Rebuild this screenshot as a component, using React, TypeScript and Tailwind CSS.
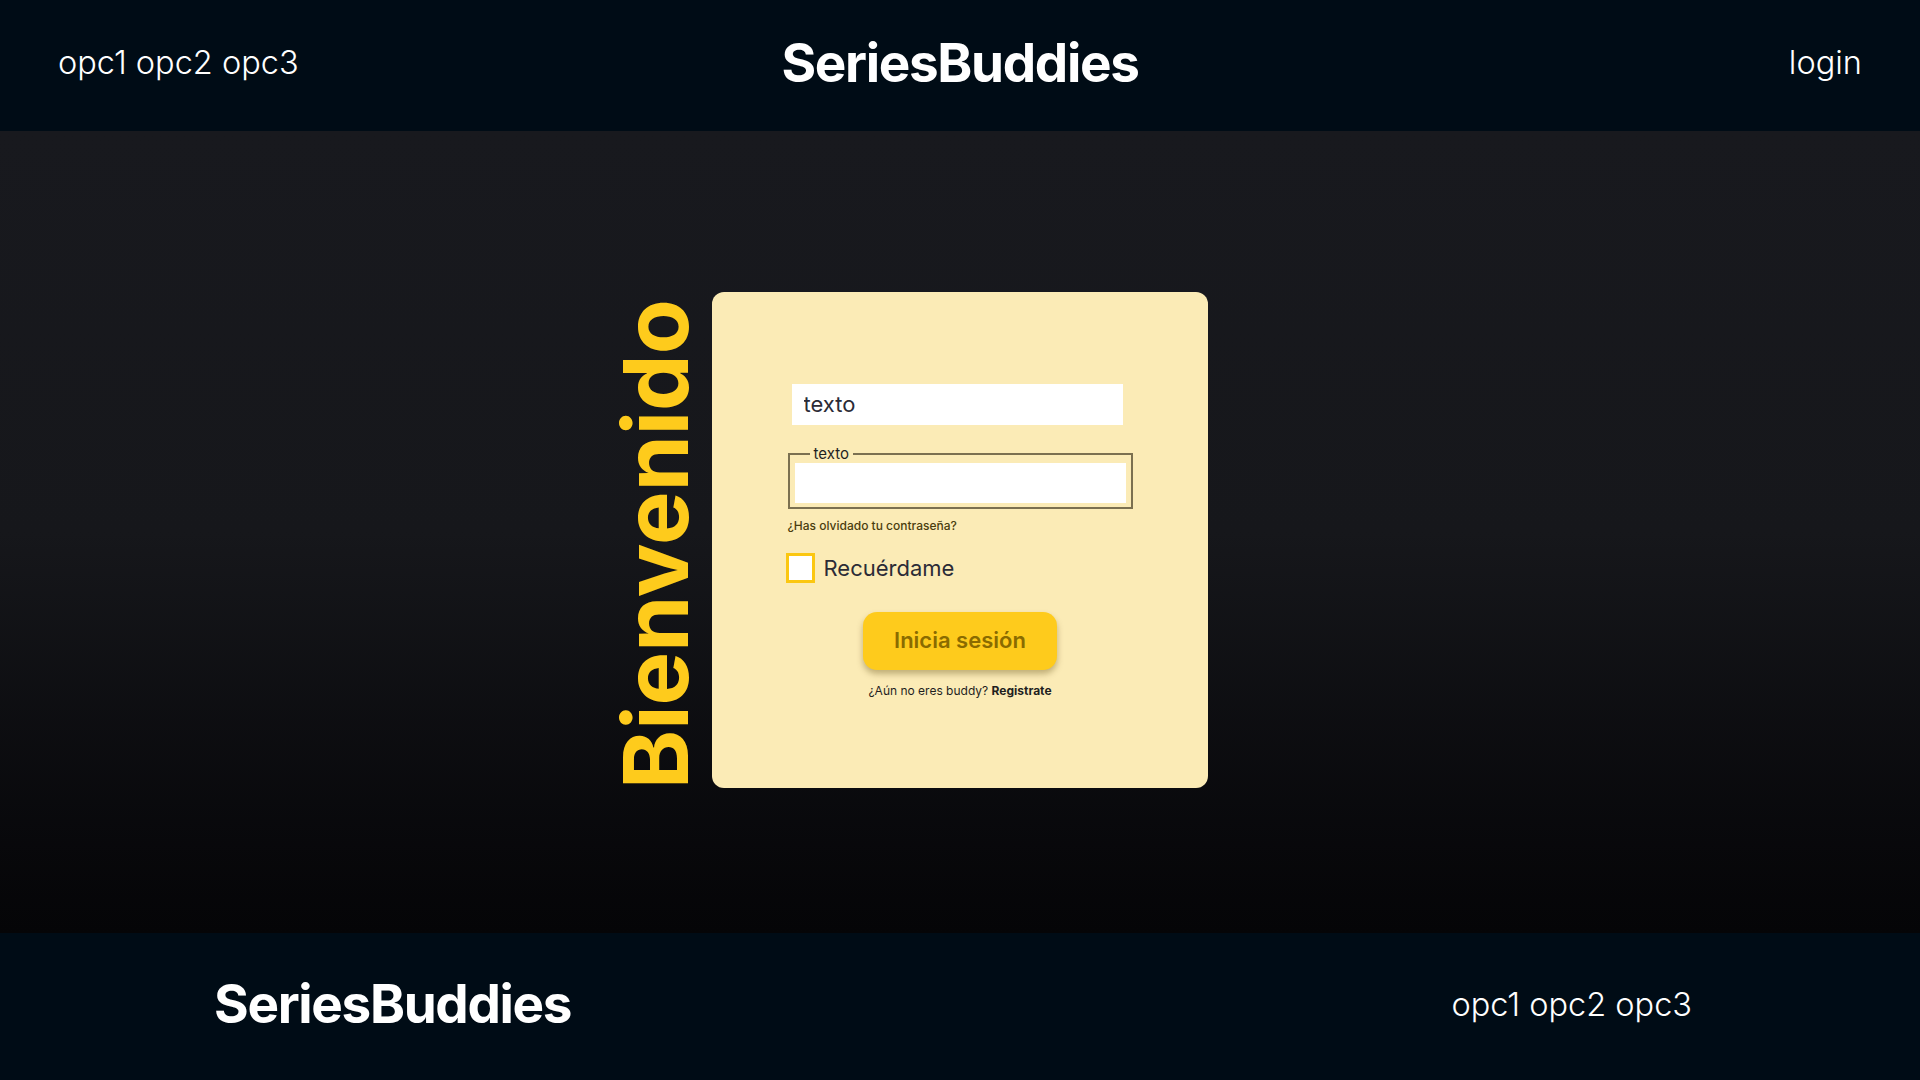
export default function App() {
  return (
    <div className="w-full min-h-screen flex flex-col bg-[#050507] font-['Inter',sans-serif]">
      {/* Header */}
      <header className="h-[131px] bg-[#000c16] grid grid-cols-3 items-center px-[58px] pb-[4px]">
        <nav className="text-white text-[32.5px] font-light">opc1 opc2 opc3</nav>
        <h1 className="text-white text-[53px] font-bold text-center tracking-tight">SeriesBuddies</h1>
        <div className="text-white text-[32.5px] font-light text-right">login</div>
      </header>

      {/* Main */}
      <main className="h-[802px] bg-gradient-to-b from-[#18191e] via-[#16171b] to-[#050507] grid grid-cols-[1fr_auto_1fr] items-center pt-[15px]">
        <div className="flex justify-end pr-[17px] pt-[10px]">
          <span className="[writing-mode:vertical-rl] rotate-180 text-[#fecb1c] text-[90px] font-bold leading-[78px]">
            Bienvenido
          </span>
        </div>

        <div className="w-[496px] h-[496px] rounded-xl bg-[#fbebb6] flex flex-col items-center pt-[92px]">
          <div className="w-[345px] flex flex-col">
            <input
              readOnly
              value="texto"
              className="mx-[4px] w-[331px] h-[41px] bg-white px-[12px] text-[22px] text-[#2b2b36] outline-none"
            />

            <fieldset className="mt-[20px] border-2 border-[#7b7050] px-[5px] pb-[4px] pt-0">
              <legend className="ml-[15px] px-[4px] text-[15px] leading-[18px] text-[#1f1f1f]">texto</legend>
              <div className="h-[40px] bg-white" />
            </fieldset>

            <a className="mt-[8px] text-[12px] font-medium text-[#4a3d0e]">¿Has olvidado tu contraseña?</a>

            <label className="mt-[17px] -ml-[2px] flex items-center gap-[9px]">
              <span className="w-[29px] h-[30px] bg-white border-[3px] border-[#fbc711]" />
              <span className="text-[22px] text-[#2b2b36]">Recuérdame</span>
            </label>
          </div>

          <button className="mt-[27px] w-[194px] h-[58px] rounded-[14px] bg-[#fecb1c] text-[22px] font-semibold text-[#8a6b00] shadow-[0_4px_6px_rgba(80,60,0,0.35)]">
            Inicia sesión
          </button>

          <p className="mt-[12px] text-[12px] text-[#1f1f1f]">
            ¿Aún no eres buddy? <span className="font-bold">Registrate</span>
          </p>
        </div>

        <div />
      </main>

      {/* Footer */}
      <footer className="h-[147px] bg-[#000c16] flex items-center justify-between pl-[214px] pr-[228px] pb-[3px]">
        <h2 className="text-white text-[53px] font-bold tracking-tight">SeriesBuddies</h2>
        <nav className="text-white text-[32.5px] font-light">opc1 opc2 opc3</nav>
      </footer>
    </div>
  );
}
